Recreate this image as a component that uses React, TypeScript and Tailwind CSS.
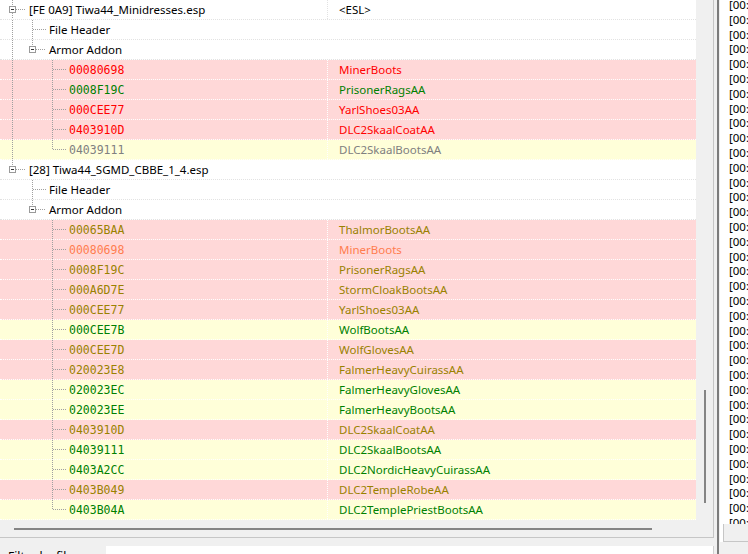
// xEdit-style record tree: conflict-coloured rows, dotted tree guides, side log panel.
type Bg = 'w' | 'p' | 'y';
type Tx = 'k' | 'r' | 'g' | 's' | 'o' | 'c';

type Row = {
  lvl: number;
  box?: boolean;
  last?: boolean;
  anc: number[];
  a: string;
  b?: string;
  bg: Bg;
  tx: Tx;
  mono?: boolean;
};

const BG: Record<Bg, string> = { w: 'bg-white', p: 'bg-[#ffd8d8]', y: 'bg-[#ffffd9]' };
const TX: Record<Tx, string> = {
  k: 'text-black',
  r: 'text-[#ff0000]',
  g: 'text-[#008000]',
  s: 'text-[#808080]',
  o: 'text-[#998100]',
  c: 'text-[#ff7d4f]',
};

const rec = (a: string, b: string, bg: Bg, tx: Tx, anc: number[], last = false): Row => ({
  lvl: 2,
  anc,
  a,
  b,
  bg,
  tx,
  last,
  mono: true,
});

const rows: Row[] = [
  { lvl: 0, box: true, anc: [], a: '[FE 0A9] Tiwa44_Minidresses.esp', b: '<ESL>', bg: 'w', tx: 'k' },
  { lvl: 1, anc: [0], a: 'File Header', bg: 'w', tx: 'k' },
  { lvl: 1, box: true, last: true, anc: [0], a: 'Armor Addon', bg: 'w', tx: 'k' },
  rec('00080698', 'MinerBoots', 'p', 'r', [0]),
  rec('0008F19C', 'PrisonerRagsAA', 'p', 'g', [0]),
  rec('000CEE77', 'YarlShoes03AA', 'p', 'r', [0]),
  rec('0403910D', 'DLC2SkaalCoatAA', 'p', 'r', [0]),
  rec('04039111', 'DLC2SkaalBootsAA', 'y', 's', [0], true),
  { lvl: 0, box: true, last: true, anc: [], a: '[28] Tiwa44_SGMD_CBBE_1_4.esp', bg: 'w', tx: 'k' },
  { lvl: 1, anc: [], a: 'File Header', bg: 'w', tx: 'k' },
  { lvl: 1, box: true, last: true, anc: [], a: 'Armor Addon', bg: 'w', tx: 'k' },
  rec('00065BAA', 'ThalmorBootsAA', 'p', 'o', []),
  rec('00080698', 'MinerBoots', 'p', 'c', []),
  rec('0008F19C', 'PrisonerRagsAA', 'p', 'o', []),
  rec('000A6D7E', 'StormCloakBootsAA', 'p', 'o', []),
  rec('000CEE77', 'YarlShoes03AA', 'p', 'o', []),
  rec('000CEE7B', 'WolfBootsAA', 'y', 'g', []),
  rec('000CEE7D', 'WolfGlovesAA', 'p', 'o', []),
  rec('020023E8', 'FalmerHeavyCuirassAA', 'p', 'o', []),
  rec('020023EC', 'FalmerHeavyGlovesAA', 'y', 'g', []),
  rec('020023EE', 'FalmerHeavyBootsAA', 'y', 'g', []),
  rec('0403910D', 'DLC2SkaalCoatAA', 'p', 'o', []),
  rec('04039111', 'DLC2SkaalBootsAA', 'y', 'g', []),
  rec('0403A2CC', 'DLC2NordicHeavyCuirassAA', 'y', 'g', []),
  rec('0403B049', 'DLC2TempleRobeAA', 'p', 'o', []),
  rec('0403B04A', 'DLC2TemplePriestBootsAA', 'y', 'g', [], true),
];

const LINE = '#a0a0a0';

const Guides = ({ row }: { row: Row }) => {
  const w = row.lvl * 20 + 27;
  const cx = row.lvl * 20 + 12.5;
  const base = row.lvl * 20;
  return (
    <svg width={w} height={19} className="shrink-0">
      {row.anc.map((a) => (
        <line key={a} x1={a * 20 + 12.5} y1={0} x2={a * 20 + 12.5} y2={19} stroke={LINE} strokeDasharray="1 1" />
      ))}
      <line x1={cx} y1={0} x2={cx} y2={row.box ? 6 : 9} stroke={LINE} strokeDasharray="1 1" />
      {!row.last && (
        <line x1={cx} y1={row.box ? 13 : 10} x2={cx} y2={19} stroke={LINE} strokeDasharray="1 1" />
      )}
      <line x1={base + (row.box ? 16 : 13)} y1={9.5} x2={base + 26} y2={9.5} stroke={LINE} strokeDasharray="1 1" />
      {row.box && (
        <>
          <rect x={base + 9.5} y={6.5} width={6} height={6} fill="white" stroke="#9a9a9a" />
          <line x1={base + 11} y1={9.5} x2={base + 14} y2={9.5} stroke="#333" />
        </>
      )}
    </svg>
  );
};

const TreeRow = ({ row, idx }: { row: Row; idx: number }) => {
  const sep = row.bg === 'w' ? 'border-[#e2e2e2]' : 'border-white';
  const vsep = idx === 0 ? 'border-[#e2e2e2]' : 'border-white';
  return (
    <div className={`flex h-[20px] shrink-0 border-b border-dotted ${BG[row.bg]} ${sep}`}>
      <div className={`flex w-[328px] shrink-0 items-center border-r border-dotted ${vsep}`}>
        <Guides row={row} />
        <span
          className={`ml-[2px] whitespace-nowrap ${TX[row.tx]} ${
            row.mono ? "mt-[2px] font-['DejaVu_Sans_Mono',monospace] text-[11.5px]" : ''
          }`}
        >
          {row.a}
        </span>
      </div>
      <div className={`flex items-center pl-[11px] whitespace-nowrap ${TX[row.tx]}`}>{row.b ?? ''}</div>
    </div>
  );
};

const logLines = Array.from({ length: 36 }, (_, i) => `[00:0${i % 10}] Processing record ${i + 1}`);

export default function App() {
  return (
    <div className="flex h-[554px] w-[748px] overflow-hidden bg-[#f0f0f0] font-['Noto_Sans',sans-serif] text-[11.5px] text-black">
      {/* Left: record tree + filter */}
      <div className="flex w-[714px] shrink-0 flex-col">
        <div className="flex h-[538px] shrink-0 border-r border-b border-[#c6c6c6]">
          <div className="flex w-[696px] shrink-0 flex-col">
            <div className="flex h-[520px] shrink-0 flex-col overflow-hidden bg-white">
              {rows.map((r, i) => (
                <TreeRow key={i} row={r} idx={i} />
              ))}
            </div>
            <div className="flex flex-1 items-center pl-[14px]">
              <div className="h-[2px] w-[638px] bg-[#858585]" />
            </div>
          </div>
          <div className="flex flex-1 flex-col pt-[390px] pl-[8px]">
            <div className="h-[113px] w-[2px] bg-[#858585]" />
          </div>
        </div>
        <div className="flex flex-1 pt-[8px]">
          <div className="w-[106px] shrink-0 pl-[8px] pt-[3px] text-[12px] leading-[16px]">Filter by file:</div>
          <div className="h-[22px] flex-1 border-r border-[#d0d0d0] bg-white" />
        </div>
      </div>

      {/* Splitter */}
      <div className="flex w-[6px] shrink-0 pl-[3px]">
        <div className="h-full w-[2px] bg-[#7c7c7c]" />
      </div>

      {/* Right: message log */}
      <div className="flex flex-1 flex-col">
        <div className="flex h-[524px] shrink-0 flex-col overflow-hidden bg-white pl-[9px]">
          <div className="-mt-[2px] flex flex-col">
            {logLines.map((l, i) => (
              <div key={i} className="h-[14.8px] shrink-0 overflow-hidden whitespace-nowrap text-[11.5px] leading-[14.8px]">
                {l}
              </div>
            ))}
          </div>
        </div>
        <div className="flex h-[18px] shrink-0 bg-white pl-[3px]">
          <div className="flex flex-1 items-center justify-end border-l border-b border-[#c6c6c6] bg-[#f0f0f0]">
            <div className="h-[2px] w-[6px] bg-[#858585]" />
          </div>
        </div>
      </div>
    </div>
  );
}
